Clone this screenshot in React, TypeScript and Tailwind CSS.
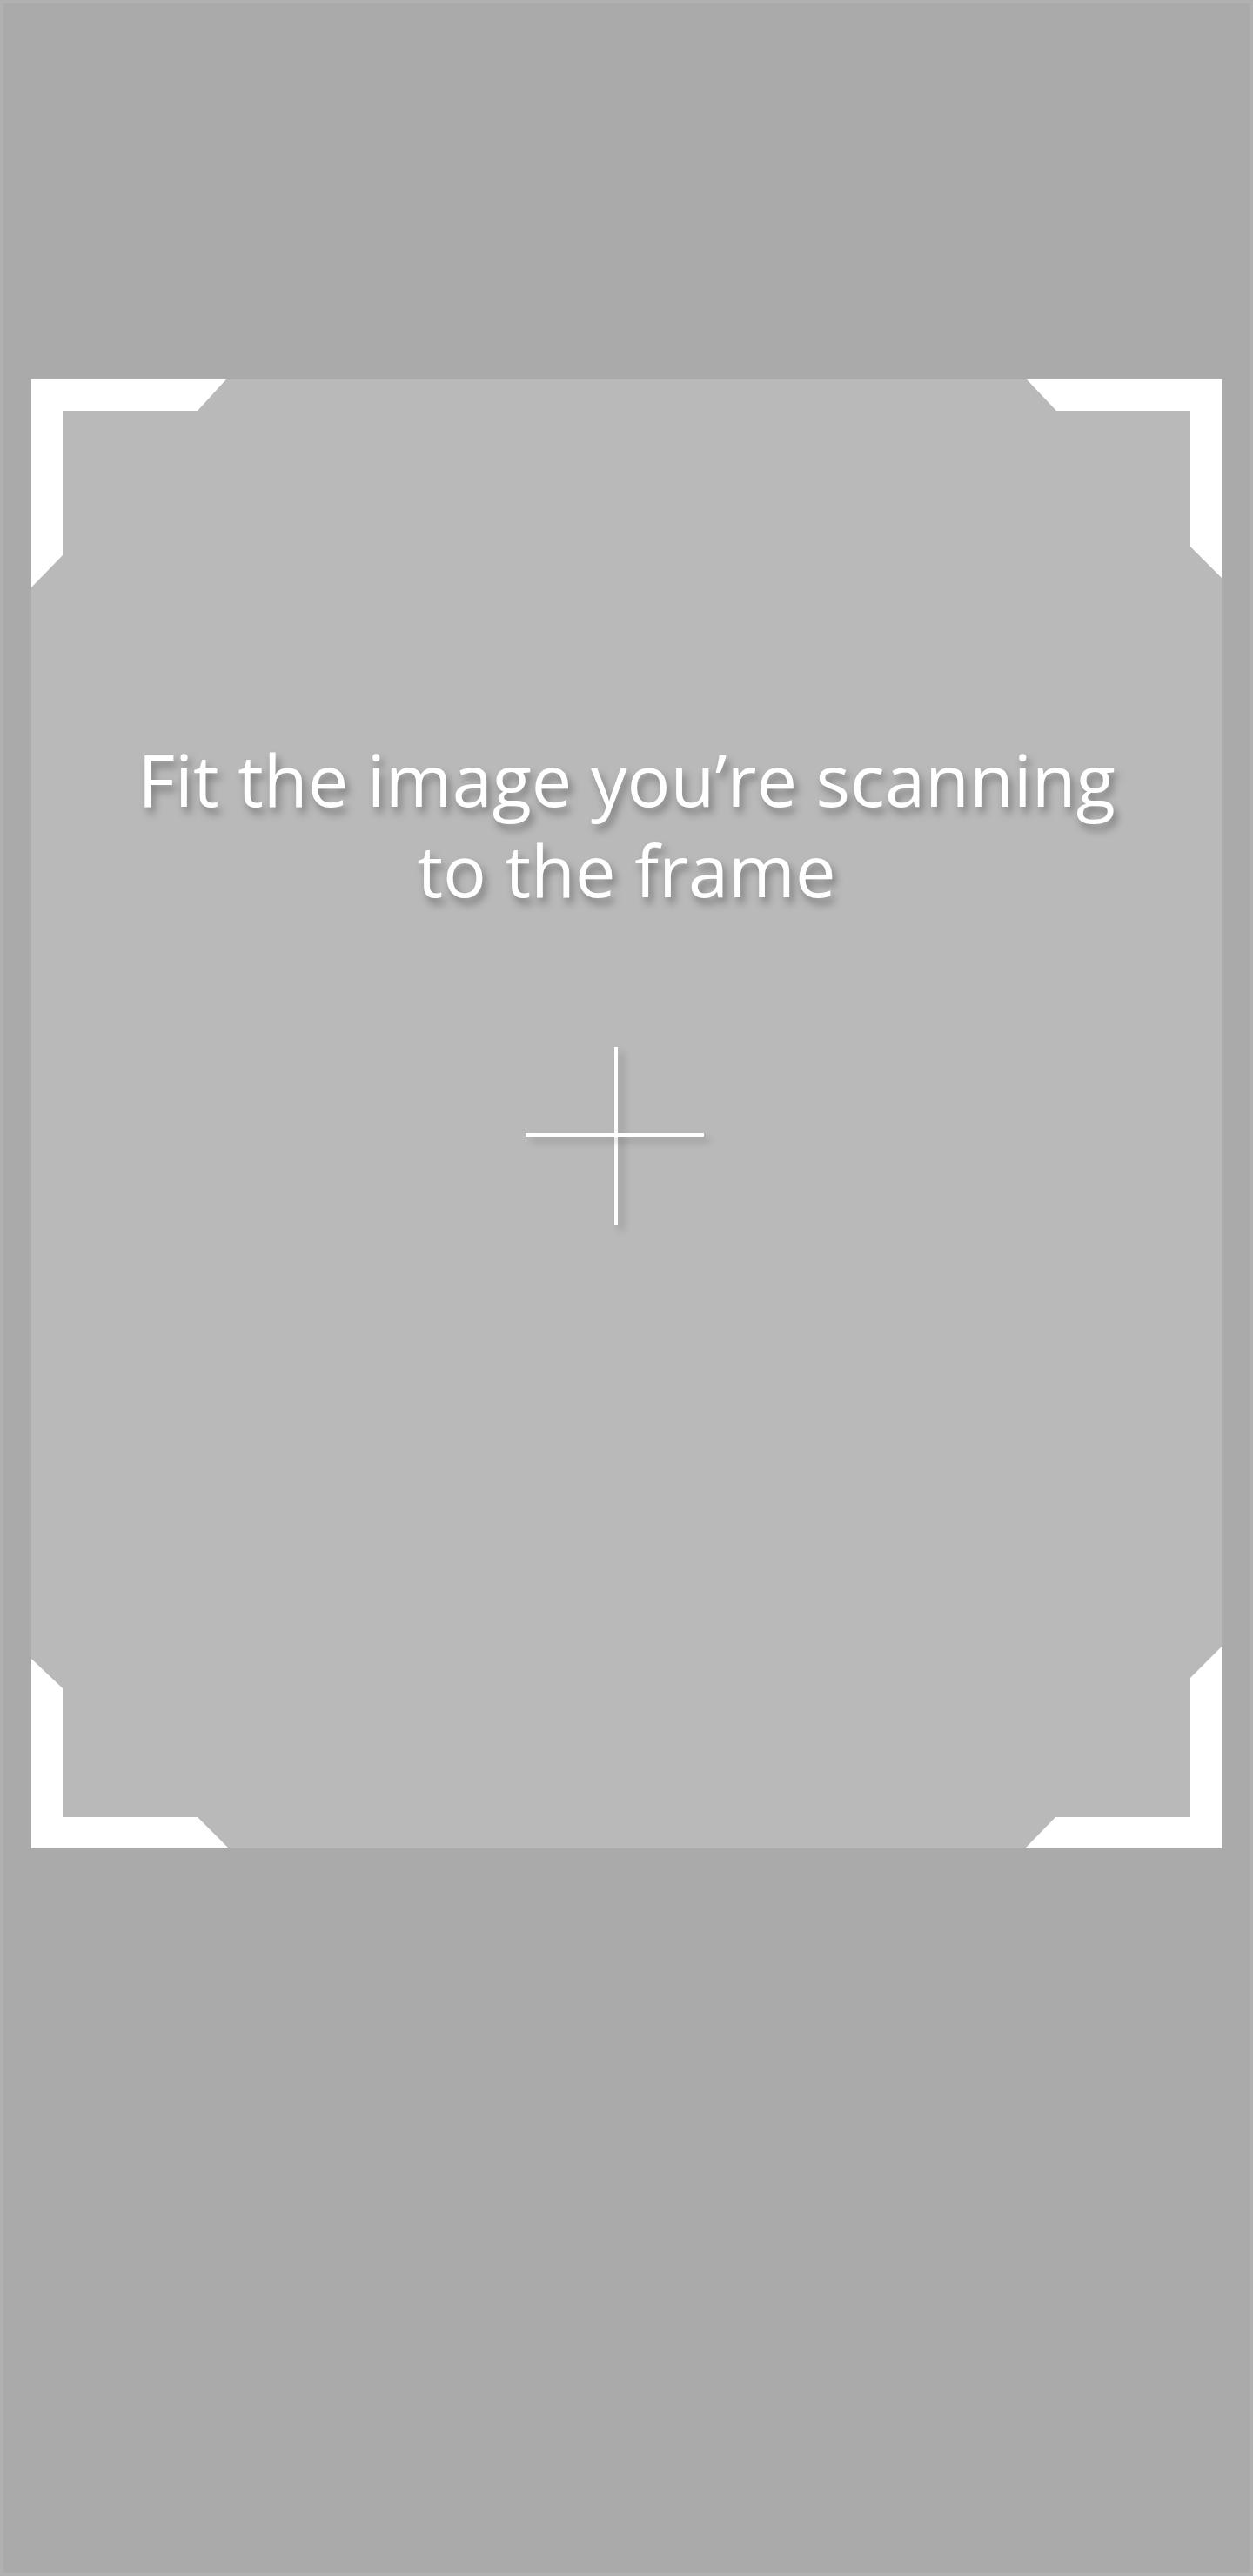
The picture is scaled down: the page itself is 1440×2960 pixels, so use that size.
import React from 'react';

const Corner: React.FC<{ points: string; className: string }> = ({ points, className }) => (
  <svg className={`absolute ${className}`} width="240" height="240" viewBox="0 0 240 240">
    <polygon points={points} fill="#ffffff" />
  </svg>
);

const App: React.FC = () => {
  return (
    <div className="h-[2960px] w-full border-4 border-[#b0b0b0] bg-[#aaaaaa] px-[32px] pt-[432px]">
      {/* scan frame */}
      <div className="relative h-[1688px] bg-[#b9b9b9]">
        <Corner className="left-0 top-0" points="0,0 224,0 191,36 36,36 36,202 0,239" />
        <Corner className="right-0 top-0" points="16,0 240,0 240,228 204,192 204,36 50,36" />
        <Corner className="left-0 bottom-0" points="0,22 36,56 36,204 191,204 227,240 0,240" />
        <Corner className="right-0 bottom-0" points="240,8 240,240 14,240 49,204 204,204 204,44" />

        <div className="flex flex-col items-center pt-[407px]">
          <p
            className="text-center text-[83px] font-medium leading-[104px] text-white [text-shadow:4px_7px_10px_rgba(0,0,0,0.35)]"
            style={{ fontFamily: '"Open Sans", "Noto Sans", sans-serif' }}
          >
            Fit the image you’re scanning
            <br />
            to the frame
          </p>

          {/* crosshair */}
          <div className="relative mr-[27px] mt-[152px] h-[205px] w-[205px]">
            <div className="absolute left-[102px] top-0 h-full w-[4px] bg-white shadow-[6px_6px_9px_rgba(0,0,0,0.22)]" />
            <div className="absolute left-0 top-[99px] h-[4px] w-full bg-white shadow-[6px_6px_9px_rgba(0,0,0,0.22)]" />
          </div>
        </div>
      </div>
    </div>
  );
};

export default App;
